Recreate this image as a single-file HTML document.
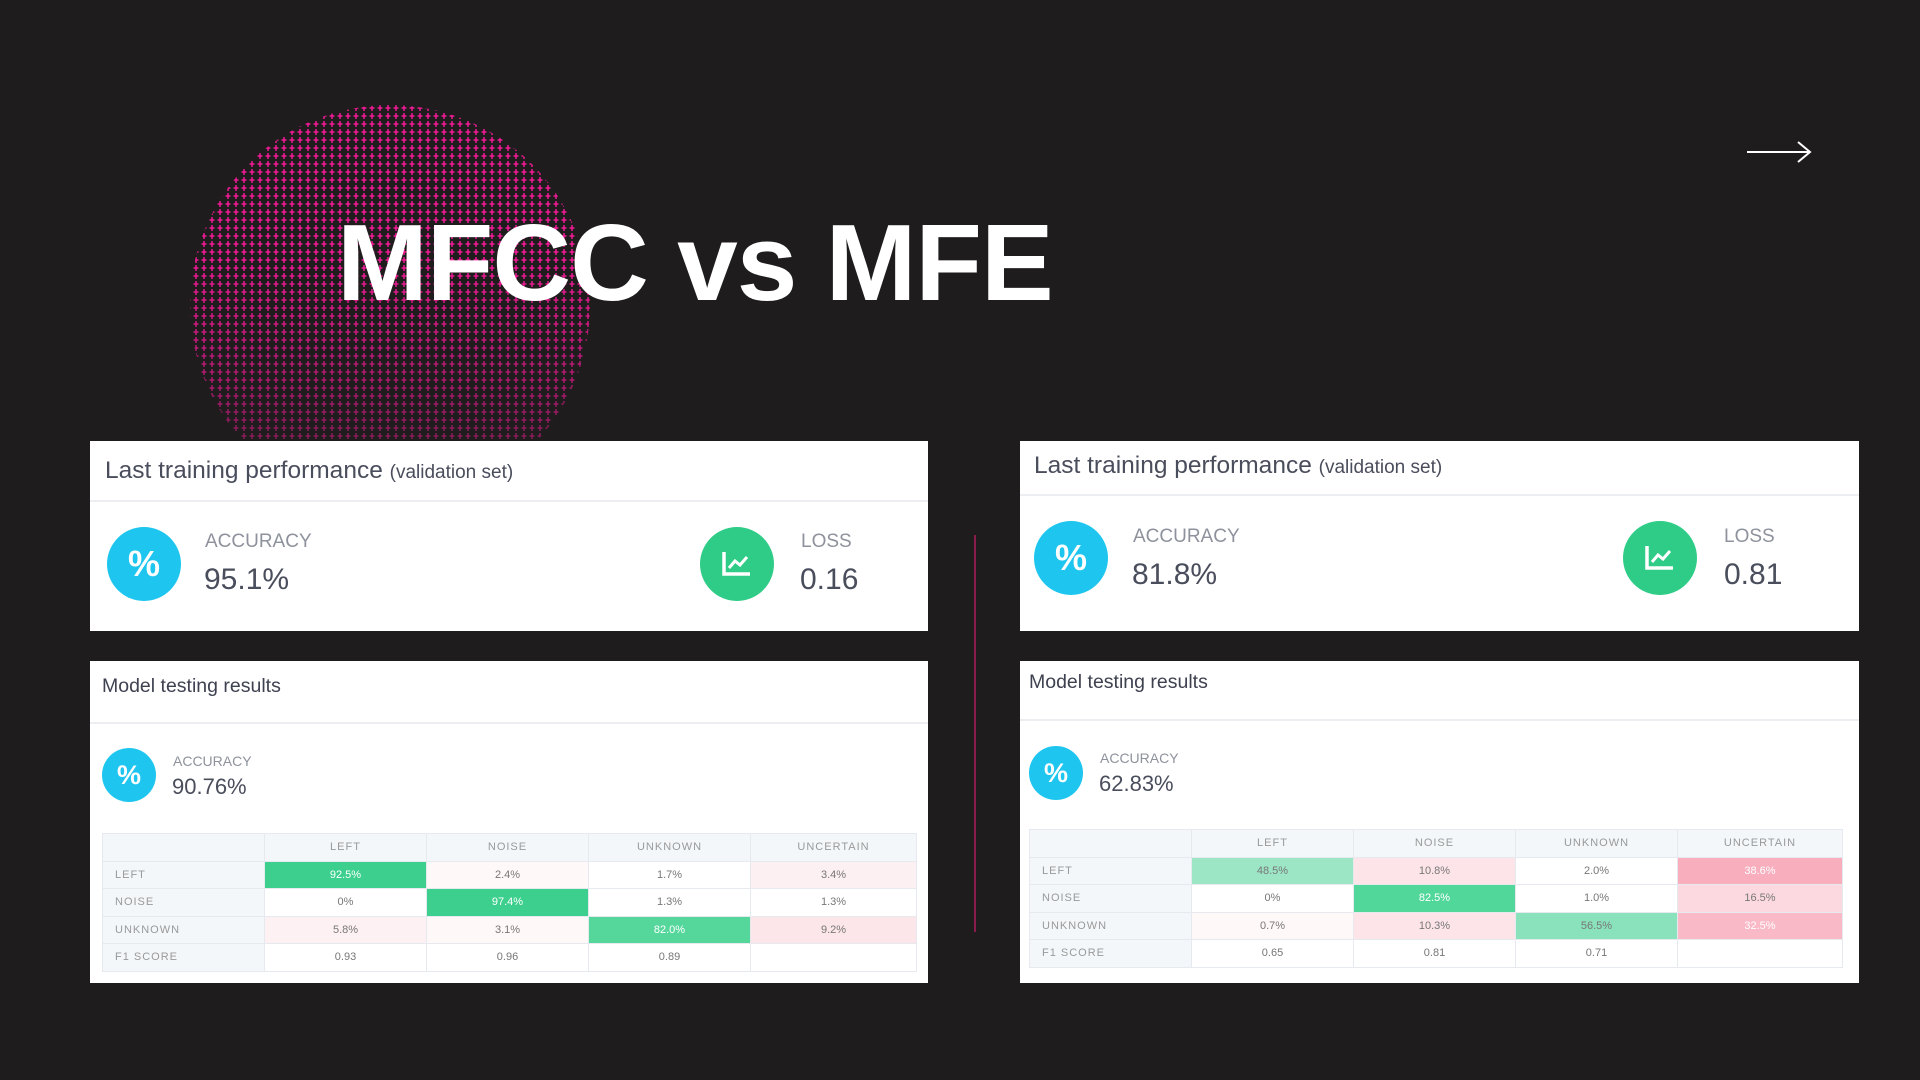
<!DOCTYPE html>
<html><head><meta charset="utf-8"><style>
*{margin:0;padding:0;box-sizing:border-box}
body{width:1920px;height:1080px;background:#1e1c1d;position:relative;overflow:hidden;font-family:"Liberation Sans",sans-serif}
.abs{position:absolute}
.panel{position:absolute;background:#fff}
.t{position:absolute;white-space:nowrap;color:#4a4e5c}
.lbl{position:absolute;white-space:nowrap;color:#8d929c}
.ic{position:absolute;border-radius:50%;display:flex;align-items:center;justify-content:center;color:#fff;font-weight:bold}
.cy{background:#1ec6ef}
.gr{background:#2ecc87}
.hl{position:absolute;left:0;right:0;height:2px;background:#eceef1}
table{position:absolute;border-collapse:collapse;table-layout:fixed}
td{border:1px solid #e6eaee;text-align:center;font-size:11px;color:#777;letter-spacing:0;height:27.5px;padding:0}
td.h{background:#f4f7fa;text-align:left;padding-left:12px;color:#999;letter-spacing:1px}
tr.hd td{background:#f4f7fa;color:#999;letter-spacing:1px}
</style></head><body>

<svg class="abs" style="left:180px;top:100px" width="420" height="345" viewBox="180 100 420 345">
<defs>
<pattern id="p" x="0" y="0" width="8" height="8" patternUnits="userSpaceOnUse">
<rect x="3.3" y="1" width="1.4" height="6" fill="#ff1a9c"/>
<rect x="1.5" y="3.3" width="5" height="1.4" fill="#ff1a9c"/>
</pattern>
<linearGradient id="g" x1="0" y1="0" x2="0" y2="1">
<stop offset="0" stop-color="#fff"/><stop offset="0.4" stop-color="#fff"/><stop offset="1" stop-color="#fff" stop-opacity="0.3"/>
</linearGradient>
<mask id="m"><circle cx="390" cy="305" r="200" fill="url(#g)"/></mask>
</defs>
<rect x="180" y="100" width="420" height="345" fill="url(#p)" mask="url(#m)"/>
</svg>

<div class="t" style="left:337px;top:200px;font-size:109px;font-weight:bold;color:#fff;letter-spacing:-1px">MFCC vs MFE</div>

<svg class="abs" style="left:1745px;top:140px" width="68" height="24"><path d="M2 12H64M53 2L65 12L53 22" stroke="#fff" stroke-width="2" fill="none"/></svg>

<div class="abs" style="left:974px;top:535px;width:1.5px;height:397px;background:#8a1c4d"></div>

<!-- Left panel 1 -->
<div class="panel" style="left:90px;top:441px;width:838px;height:190px">
 <div class="t" style="left:15px;top:16px;font-size:24.5px;color:#4a4e5c">Last training performance <span style="font-size:19px">(validation set)</span></div>
 <div class="hl" style="top:59px"></div>
 <div class="ic cy" style="left:17px;top:86px;width:74px;height:74px;font-size:36px">%</div>
 <div class="lbl" style="left:115px;top:90px;font-size:19px">ACCURACY</div>
 <div class="t" style="left:114px;top:122px;font-size:30px">95.1%</div>
 <div class="ic gr" style="left:610px;top:86px;width:74px;height:74px"><svg width="32" height="28"><path d="M3 2V24H29" stroke="#fff" stroke-width="3.5" fill="none"/><path d="M8 18L14 11L19 15L26 7" stroke="#fff" stroke-width="3" fill="none"/></svg></div>
 <div class="lbl" style="left:711px;top:90px;font-size:19px">LOSS</div>
 <div class="t" style="left:710px;top:122px;font-size:30px">0.16</div>
</div>

<!-- Right panel 1 -->
<div class="panel" style="left:1020px;top:441px;width:839px;height:190px">
 <div class="t" style="left:14px;top:11px;font-size:24.5px">Last training performance <span style="font-size:19px">(validation set)</span></div>
 <div class="hl" style="top:53px"></div>
 <div class="ic cy" style="left:14px;top:80px;width:74px;height:74px;font-size:36px">%</div>
 <div class="lbl" style="left:113px;top:85px;font-size:19px">ACCURACY</div>
 <div class="t" style="left:112px;top:117px;font-size:30px">81.8%</div>
 <div class="ic gr" style="left:603px;top:80px;width:74px;height:74px"><svg width="32" height="28"><path d="M3 2V24H29" stroke="#fff" stroke-width="3.5" fill="none"/><path d="M8 18L14 11L19 15L26 7" stroke="#fff" stroke-width="3" fill="none"/></svg></div>
 <div class="lbl" style="left:704px;top:85px;font-size:19px">LOSS</div>
 <div class="t" style="left:704px;top:117px;font-size:30px">0.81</div>
</div>

<!-- Left panel 2 -->
<div class="panel" style="left:90px;top:661px;width:838px;height:322px">
 <div class="t" style="left:12px;top:14px;font-size:19.5px;color:#3e4250">Model testing results</div>
 <div class="hl" style="top:61px"></div>
 <div class="ic cy" style="left:12px;top:87px;width:54px;height:54px;font-size:27px">%</div>
 <div class="lbl" style="left:83px;top:92px;font-size:14px">ACCURACY</div>
 <div class="t" style="left:82px;top:113px;font-size:22px">90.76%</div>
 <table style="left:12px;top:172px;width:814px">
 <colgroup><col style="width:162px"><col style="width:162px"><col style="width:162px"><col style="width:162px"><col style="width:166px"></colgroup>
 <tr class="hd"><td></td><td>LEFT</td><td>NOISE</td><td>UNKNOWN</td><td>UNCERTAIN</td></tr>
 <tr><td class="h">LEFT</td><td style="background:#3dcf8e;color:#fff">92.5%</td><td style="background:#fff8f9">2.4%</td><td>1.7%</td><td style="background:#fdf0f2">3.4%</td></tr>
 <tr><td class="h">NOISE</td><td>0%</td><td style="background:#3dcf8e;color:#fff">97.4%</td><td>1.3%</td><td>1.3%</td></tr>
 <tr><td class="h">UNKNOWN</td><td style="background:#fdf1f3">5.8%</td><td style="background:#fff8f9">3.1%</td><td style="background:#55d79c;color:#fff">82.0%</td><td style="background:#fce6ea">9.2%</td></tr>
 <tr><td class="h">F1 SCORE</td><td>0.93</td><td>0.96</td><td>0.89</td><td></td></tr>
 </table>
</div>

<!-- Right panel 2 -->
<div class="panel" style="left:1020px;top:661px;width:839px;height:322px">
 <div class="t" style="left:9px;top:10px;font-size:19.5px;color:#3e4250">Model testing results</div>
 <div class="hl" style="top:58px"></div>
 <div class="ic cy" style="left:9px;top:85px;width:54px;height:54px;font-size:27px">%</div>
 <div class="lbl" style="left:80px;top:89px;font-size:14px">ACCURACY</div>
 <div class="t" style="left:79px;top:110px;font-size:22px">62.83%</div>
 <table style="left:9px;top:168px;width:813px">
 <colgroup><col style="width:162px"><col style="width:162px"><col style="width:162px"><col style="width:162px"><col style="width:165px"></colgroup>
 <tr class="hd"><td></td><td>LEFT</td><td>NOISE</td><td>UNKNOWN</td><td>UNCERTAIN</td></tr>
 <tr><td class="h">LEFT</td><td style="background:#9ce6c6">48.5%</td><td style="background:#fde4e9">10.8%</td><td>2.0%</td><td style="background:#f8aebd;color:#fff">38.6%</td></tr>
 <tr><td class="h">NOISE</td><td>0%</td><td style="background:#52d79b;color:#fff">82.5%</td><td>1.0%</td><td style="background:#fcd9e0">16.5%</td></tr>
 <tr><td class="h">UNKNOWN</td><td style="background:#fff8f9">0.7%</td><td style="background:#fde4e9">10.3%</td><td style="background:#89e2bb">56.5%</td><td style="background:#f9b9c6;color:#fff">32.5%</td></tr>
 <tr><td class="h">F1 SCORE</td><td>0.65</td><td>0.81</td><td>0.71</td><td></td></tr>
 </table>
</div>

</body></html>
